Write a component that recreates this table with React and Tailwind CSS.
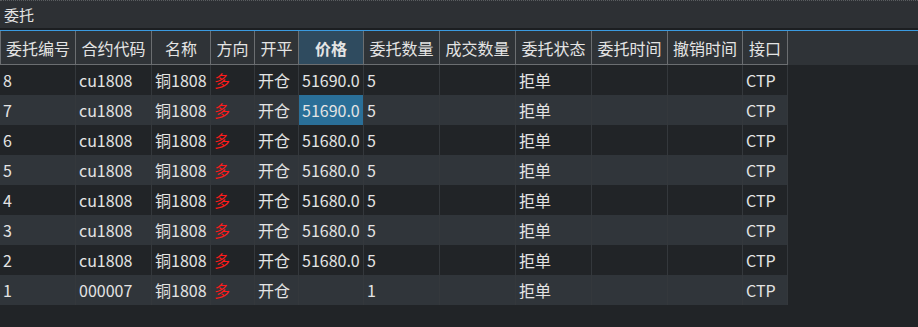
import React from "react";

const cols = [
  { key: "id", title: "委托编号", w: "w-[76px]" },
  { key: "code", title: "合约代码", w: "w-[76px]" },
  { key: "name", title: "名称", w: "w-[59px]" },
  { key: "dir", title: "方向", w: "w-[44px]" },
  { key: "oc", title: "开平", w: "w-[44px]" },
  { key: "price", title: "价格", w: "w-[65px]" },
  { key: "vol", title: "委托数量", w: "w-[76px]" },
  { key: "traded", title: "成交数量", w: "w-[76px]" },
  { key: "status", title: "委托状态", w: "w-[76px]" },
  { key: "time", title: "委托时间", w: "w-[76px]" },
  { key: "cancel", title: "撤销时间", w: "w-[75px]" },
  { key: "gw", title: "接口", w: "w-[45px]" },
];

const rows = [
  { id: "8", code: "cu1808", price: "51690.0", vol: "5" },
  { id: "7", code: "cu1808", price: "51690.0", vol: "5", selected: true },
  { id: "6", code: "cu1808", price: "51680.0", vol: "5" },
  { id: "5", code: "cu1808", price: "51680.0", vol: "5" },
  { id: "4", code: "cu1808", price: "51680.0", vol: "5" },
  { id: "3", code: "cu1808", price: "51680.0", vol: "5" },
  { id: "2", code: "cu1808", price: "51680.0", vol: "5" },
  { id: "1", code: "000007", price: "", vol: "1" },
].map((r) => ({
  ...r,
  name: "铜1808",
  dir: "多",
  oc: "开仓",
  traded: "",
  status: "拒单",
  time: "",
  cancel: "",
  gw: "CTP",
}));

export default function App() {
  return (
    <div
      className="w-[918px] h-[327px] overflow-hidden bg-[#212427] text-[#e4e4e4] text-[16px]"
      style={{ fontFamily: '"Noto Sans CJK SC", "Noto Sans", sans-serif' }}
    >
      {/* title bar */}
      <div className="h-[28px] bg-[#2d3034] border-t border-dotted border-[#5a5d60] flex items-center px-[4px] text-[15px] leading-none">
        委托
      </div>
      <div className="h-[2px] bg-[#1c1e21]" />
      <div className="h-[1px] bg-[#3b9be0]" />

      {/* header */}
      <div className="flex h-[34px] bg-[#2f3337]">
        {cols.map((c, i) => (
          <div
            key={c.key}
            className={`${c.w} shrink-0 flex items-center justify-center border-r border-b border-[#6b6e71] leading-none ${
              i === 0 ? "border-l" : ""
            } ${c.key === "price" ? "bg-[#2f4b5f] font-bold" : ""}`}
          >
            {c.title}
          </div>
        ))}
      </div>

      {/* body */}
      {rows.map((r, ri) => (
        <div
          key={r.id}
          className={`flex h-[30px] w-[788px] ${ri % 2 === 0 ? "bg-[#212427]" : "bg-[#30353a]"}`}
        >
          {cols.map((c) => (
            <div
              key={c.key}
              className={`${c.w} shrink-0 flex items-center pl-[3px] border-r border-[#34383c] leading-none whitespace-nowrap ${
                c.key === "dir" ? "text-[#ff1a1a]" : ""
              } ${c.key === "price" && r.selected ? "bg-[#2a6f98]" : ""}`}
            >
              {r[c.key]}
            </div>
          ))}
        </div>
      ))}
    </div>
  );
}
